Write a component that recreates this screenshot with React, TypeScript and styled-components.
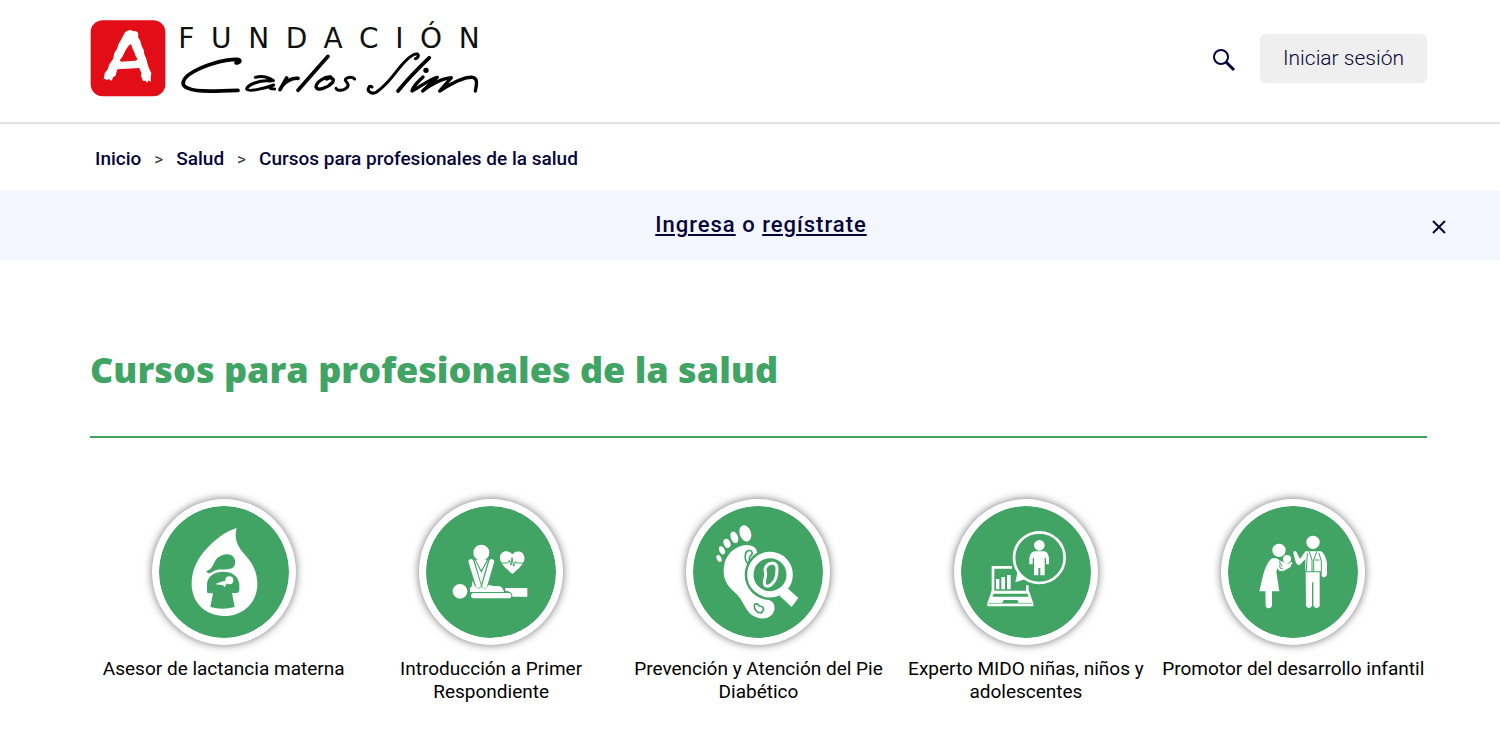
import React from "react";
import styled, { createGlobalStyle } from "styled-components";

const green = "#41a464";
const navy = "#05053a";

const GlobalStyle = createGlobalStyle`
  * { box-sizing: border-box; }
  body {
    margin: 0;
    background: #fff;
    color: #000;
    font-family: Roboto, "Liberation Sans", sans-serif;
  }
`;

const Header = styled.header`
  display: flex;
  align-items: center;
  justify-content: space-between;
  height: 124px;
  padding: 0 73px 6px 90px;
  border-bottom: 2px solid #e2e2e2;
`;

const LogoLink = styled.a`
  display: block;
  padding-top: 4px;
  line-height: 0;
`;

const Actions = styled.div`
  display: flex;
  align-items: center;
  gap: 24px;
`;

const IconButton = styled.button`
  display: flex;
  align-items: center;
  justify-content: center;
  padding: 4px 0 0;
  border: 0;
  background: none;
  color: ${navy};
  cursor: pointer;
`;

const LoginButton = styled.button`
  height: 49px;
  padding: 0 23px;
  border: 0;
  border-radius: 6px;
  background: #efefef;
  color: ${navy};
  font: 300 21px/49px Roboto, sans-serif;
  cursor: pointer;
`;

const Breadcrumb = styled.nav`
  padding: 24px 95px 20px;

  ol {
    display: flex;
    gap: 13px;
    margin: 0;
    padding: 0;
    list-style: none;
    font-size: 19px;
    line-height: 22px;
  }
`;

const Crumb = styled.li`
  display: flex;
  gap: 13px;

  a {
    color: ${navy};
    font-weight: 500;
    text-decoration: none;
  }
`;

const Separator = styled.span`
  color: #333;
  font-size: 17px;
`;

const Banner = styled.div`
  display: flex;
  align-items: center;
  height: 70px;
  padding: 0 52px 0 92px;
  background: #f3f6ff;
`;

const BannerText = styled.p`
  flex: 1;
  margin: 0;
  color: ${navy};
  font-size: 22px;
  font-weight: 500;
  line-height: 28px;
  letter-spacing: 1px;
  text-align: center;

  a {
    color: inherit;
    text-underline-offset: 2px;
    text-decoration-thickness: 2px;
  }
`;

const Main = styled.main`
  padding: 84px 73px 40px 90px;
`;

const Title = styled.h1`
  margin: 0;
  padding-bottom: 40px;
  border-bottom: 2px solid ${green};
  color: ${green};
  font: 800 36px/52px "Open Sans", sans-serif;
`;

const CourseGrid = styled.ul`
  display: grid;
  grid-template-columns: repeat(5, 1fr);
  margin: 0;
  padding: 61px 0 0;
  list-style: none;
`;

const Course = styled.a`
  display: flex;
  flex-direction: column;
  align-items: center;
  gap: 12px;
  color: #000;
  font-size: 19px;
  line-height: 23px;
  text-align: center;
  text-decoration: none;
`;

const Badge = styled.span`
  display: block;
  width: 144px;
  height: 146px;
  border: 7px solid #fff;
  border-radius: 50%;
  background: ${green};
  background-clip: padding-box;
  box-shadow: 0 0 8px rgba(0, 0, 0, 0.55);

  svg {
    display: block;
    width: 100%;
    height: 100%;
  }
`;

const Logo = () => (
  <svg width="420" height="90" viewBox="0 0 1260 270" role="img" aria-label="Fundación Carlos Slim">
    <rect x="2" y="16" width="224" height="228" rx="36" fill="#e20d17" />
    <path
      fill="#fff"
      d="M105 52 112 47 121 45 129 48 137 49 143 52 145 59 144 66 151 78 155 93 161 104 163 118 169 132 173 148 177 160 184 174 182 190 183 201 176 196 172 203 166 197 159 198 153 183 154 174 148 159 82 163 78 177 76 183 69 187 65 198 56 192 51 196 45 191 41 193 44 175 53 163 58 148 69 132 73 114 81 101 86 86 94 73Z"
    />
    <path fill="#e20d17" d="M117 91 123 87 127 100 133 112 137 124 143 133 136 137 121 138 94 140 89 136 97 126 104 111 109 102Z" />
    <text x="265" y="98" fontFamily="DejaVu Sans, sans-serif" fontSize="84" letterSpacing="50" fill="#111">
      FUNDACIÓN
    </text>
    <g fill="none" stroke="#000" strokeWidth="11" strokeLinecap="round" strokeLinejoin="round">
      <g transform="translate(258 90)">
        <path d="M180 54C192 54 197 44 184 43C140 43 80 62 46 84C20 100 16 118 28 126C50 140 90 140 186 136" />
        <path d="M238 97Q262 91 280 100L292 107M284 108C250 104 214 120 212 132C216 141 262 132 293 120C282 126 274 132 296 132" strokeWidth="9" />
        <path d="M332 99 312 134M320 121C334 106 348 98 366 100" />
        <path d="M456 34 366 136" />
        <path d="M464 96C446 94 420 112 420 126C424 140 456 128 470 112C476 100 464 94 452 102" strokeWidth="10" />
        <path d="M536 102C526 92 508 98 508 106C514 114 522 122 510 130C500 138 484 138 480 130" strokeWidth="9" />
      </g>
      <g transform="translate(810 90)">
        <path d="M166 41C174 40 178 31 172 27C158 24 134 48 112 76C94 100 72 125 50 141C36 150 20 138 26 128C28 122 34 124 36 126" strokeWidth="9" />
        <path d="M208 38C180 65 145 100 114 138" />
        <path d="M189 96C175 110 160 122 156 138C180 125 215 100 232 97L188 138C212 118 250 99 274 98L239 138C270 118 312 95 338 97C354 100 350 118 346 138" strokeWidth="10" />
        <circle cx="198" cy="76" r="8" fill="#000" stroke="none" />
      </g>
    </g>
  </svg>
);

const SearchIcon = () => (
  <svg width="24" height="24" viewBox="0 0 24 24" fill="none" stroke="currentColor" strokeWidth="2" aria-hidden="true">
    <circle cx="9" cy="9" r="7" />
    <path d="m14 14 8 8" strokeWidth="3" />
  </svg>
);

const CloseIcon = () => (
  <svg width="18" height="18" viewBox="0 0 18 18" stroke="currentColor" strokeWidth="2" aria-hidden="true">
    <path d="M3 3 15 15M15 3 3 15" />
  </svg>
);

const Breastfeeding = () => (
  <>
    <path
      fill="#fff"
      d="M286 114C276 150 292 174 314 198C337 223 348 250 348 283C348 338 305 378 249 378C193 378 151 338 151 283C151 224 185 184 216 156C239 136 262 121 286 114Z"
    />
    <path
      fill={green}
      d="M195 243C209 240 213 229 220 215C232 194 255 190 269 195C282 201 285 219 278 229C268 244 244 235 225 240C214 243 209 252 199 249Z"
    />
    <path
      fill={green}
      d="M197 305V281C199 258 220 245 246 245C274 245 290 258 294 282V301Q293 309 285 309H272L280 351Q244 362 207 351L215 310H204Q197 310 197 305Z"
    />
    <circle cx="264" cy="271" r="12" fill="#fff" />
    <path fill="#fff" d="M221 283 235 277 252 272 256 281 250 292 245 286 235 284Z" />
  </>
);

const Resuscitation = () => (
  <>
    <circle cx="219" cy="188" r="24" fill="#fff" />
    <path fill="#fff" d="M180 211Q188 204 199 209L219 248 240 209Q250 204 258 212L239 286H250V296H190L192 272 198 283Z" />
    <g fill="none" strokeLinecap="round" strokeLinejoin="round">
      <path d="M189 215 209 285M249 215 229 285" stroke={green} strokeWidth="21" />
      <path d="M188 215 210 286M250 215 229 287" stroke="#fff" strokeWidth="15" />
    </g>
    <path d="M202 209 219 241 236 209Z" fill="#fff" />
    <circle cx="155" cy="304" r="22" fill="#fff" />
    <path fill="#fff" d="M185 306V295Q188 288 200 288L206 293Q211 300 220 294 231 302 239 288H270Q284 290 287 306ZM290 294H357V320H312Q313 304 292 303Z" />
    <rect x="188" y="309" width="121" height="16" rx="8" fill="#fff" />
    <path fill="#fff" d="M312 193C296 176 274 185 275 205C276 224 297 238 312 252C330 236 351 220 348 201C345 180 320 181 312 193Z" />
    <path d="M275 219H297L303 211 308 226 311 203 316 229 321 214 326 219H348" fill="none" stroke={green} strokeWidth="3" />
  </>
);

const DiabeticFoot = () => (
  <>
    <g fill="#fff">
      <ellipse cx="210" cy="130" rx="17" ry="25" transform="rotate(-19 210 130)" />
      <ellipse cx="177" cy="142" rx="11" ry="18" transform="rotate(-20 177 142)" />
      <ellipse cx="155" cy="160" rx="10" ry="14" transform="rotate(-22 155 160)" />
      <ellipse cx="140" cy="181" rx="8" ry="13" transform="rotate(-24 140 181)" />
      <ellipse cx="131" cy="205" rx="7" ry="11" transform="rotate(-24 131 205)" />
      <path d="M212 165C237 165 251 179 243 199L232 240 244 301 281 330C301 337 302 360 289 375C274 390 248 388 231 376C209 361 202 325 176 305C153 285 141 262 146 230C149 197 176 168 212 165Z" />
    </g>
    <g fill="none" stroke={green} strokeLinejoin="round">
      <path d="M214 218C207 206 208 186 218 182C232 179 234 192 225 198C218 204 226 210 220 218Z" strokeWidth="5" />
      <path d="M237 346C239 338 247 342 252 348C267 349 268 361 257 369C244 370 236 356 237 346Z" strokeWidth="5" />
    </g>
    <circle cx="284" cy="254" r="76" fill={green} />
    <path d="m313 318 22-25 34 31-20 27-25-23Z" fill="#fff" />
    <circle cx="284" cy="254" r="59" fill={green} stroke="#fff" strokeWidth="19" />
    <path d="M291 219C277 220 266 231 270 246C275 255 266 266 267 279C268 292 282 292 292 280C303 267 304 257 305 239C306 226 301 220 291 219Z" fill="none" stroke="#fff" strokeWidth="9" />
  </>
);

const ChildExpert = () => (
  <>
    <path d="M206 232H149V305M252 286V306" fill="none" stroke="#fff" strokeWidth="8" />
    <path fill="#fff" d="M158 267H168V298H158ZM174 261H185V298H174ZM191 255H202V298H191Z" />
    <path fill="#fff" fillRule="evenodd" d="M145 302H257L270 340V349H132V340ZM151 311 147 320H256L252 311ZM177 339H226L222 330H181Z" />
    <path d="M136 340H267" stroke={green} strokeWidth="2" />
    <path fill="#fff" d="M224 239 216 277 250 266Z" />
    <circle cx="288" cy="203" r="76" fill={green} stroke="#fff" strokeWidth="8" />
    <circle cx="288" cy="166" r="16" fill="#fff" />
    <path fill="#fff" d="M275 184H302Q315 185 317 205V223H308V205L304 202V256H291V234H285V256H272V202L268 206V223H258V205Q260 185 275 184Z" />
  </>
);

const FamilyPromoter = () => (
  <>
    <g fill="#fff">
      <circle cx="206" cy="181" r="20" />
      <path d="M182 207Q194 199 207 210L198 246 207 304H147C155 273 160 229 182 207ZM165 299H185V346Q184 355 174 355 166 354 166 346Z" />
      <circle cx="230" cy="207" r="12" />
      <path d="M205 211 219 216 235 221 243 216 247 221 220 236 211 233Z" />
      <circle cx="308" cy="157" r="20" />
      <path d="M285 184H332Q345 191 350 219V255Q341 268 334 258V244H285V207L269 224Q264 228 257 219L249 190Q249 180 258 185L269 207Z" />
      <path d="M286 247H328V349Q317 360 309 347V277H305V347Q298 360 287 349Z" />
    </g>
    <g fill="none" strokeLinecap="round">
      <path d="M205 219Q199 240 216 241L239 228" stroke="#fff" strokeWidth="7" />
      <path d="M201 256 217 242M207 215 215 229" stroke={green} strokeWidth="3" />
      <path d="M291 190 288 242M297 185 305 210V245M319 185 310 210V245M326 190 333 213V244M314 210H326" stroke={green} strokeWidth="3" />
    </g>
  </>
);

const courses = [
  { name: "Asesor de lactancia materna", Icon: Breastfeeding },
  { name: "Introducción a Primer Respondiente", Icon: Resuscitation },
  { name: "Prevención y Atención del Pie Diabético", Icon: DiabeticFoot },
  { name: "Experto MIDO niñas, niños y adolescentes", Icon: ChildExpert },
  { name: "Promotor del desarrollo infantil", Icon: FamilyPromoter },
];

const crumbs = ["Inicio", "Salud", "Cursos para profesionales de la salud"];

export default function App() {
  return (
    <>
      <GlobalStyle />
      <Header>
        <LogoLink href="#inicio">
          <Logo />
        </LogoLink>
        <Actions>
          <IconButton type="button" aria-label="Buscar">
            <SearchIcon />
          </IconButton>
          <LoginButton type="button">Iniciar sesión</LoginButton>
        </Actions>
      </Header>
      <Breadcrumb aria-label="Ruta de navegación">
        <ol>
          {crumbs.map((crumb, index) => (
            <Crumb key={crumb}>
              {index > 0 && <Separator aria-hidden="true">&gt;</Separator>}
              <a href="#ruta">{crumb}</a>
            </Crumb>
          ))}
        </ol>
      </Breadcrumb>
      <Banner>
        <BannerText>
          <a href="#ingresa">Ingresa</a> o <a href="#registro">regístrate</a>
        </BannerText>
        <IconButton type="button" aria-label="Cerrar">
          <CloseIcon />
        </IconButton>
      </Banner>
      <Main>
        <Title>Cursos para profesionales de la salud</Title>
        <CourseGrid>
          {courses.map(({ name, Icon }) => (
            <li key={name}>
              <Course href="#curso">
                <Badge>
                  <svg viewBox="53 48 390 396" aria-hidden="true">
                    <Icon />
                  </svg>
                </Badge>
                {name}
              </Course>
            </li>
          ))}
        </CourseGrid>
      </Main>
    </>
  );
}
